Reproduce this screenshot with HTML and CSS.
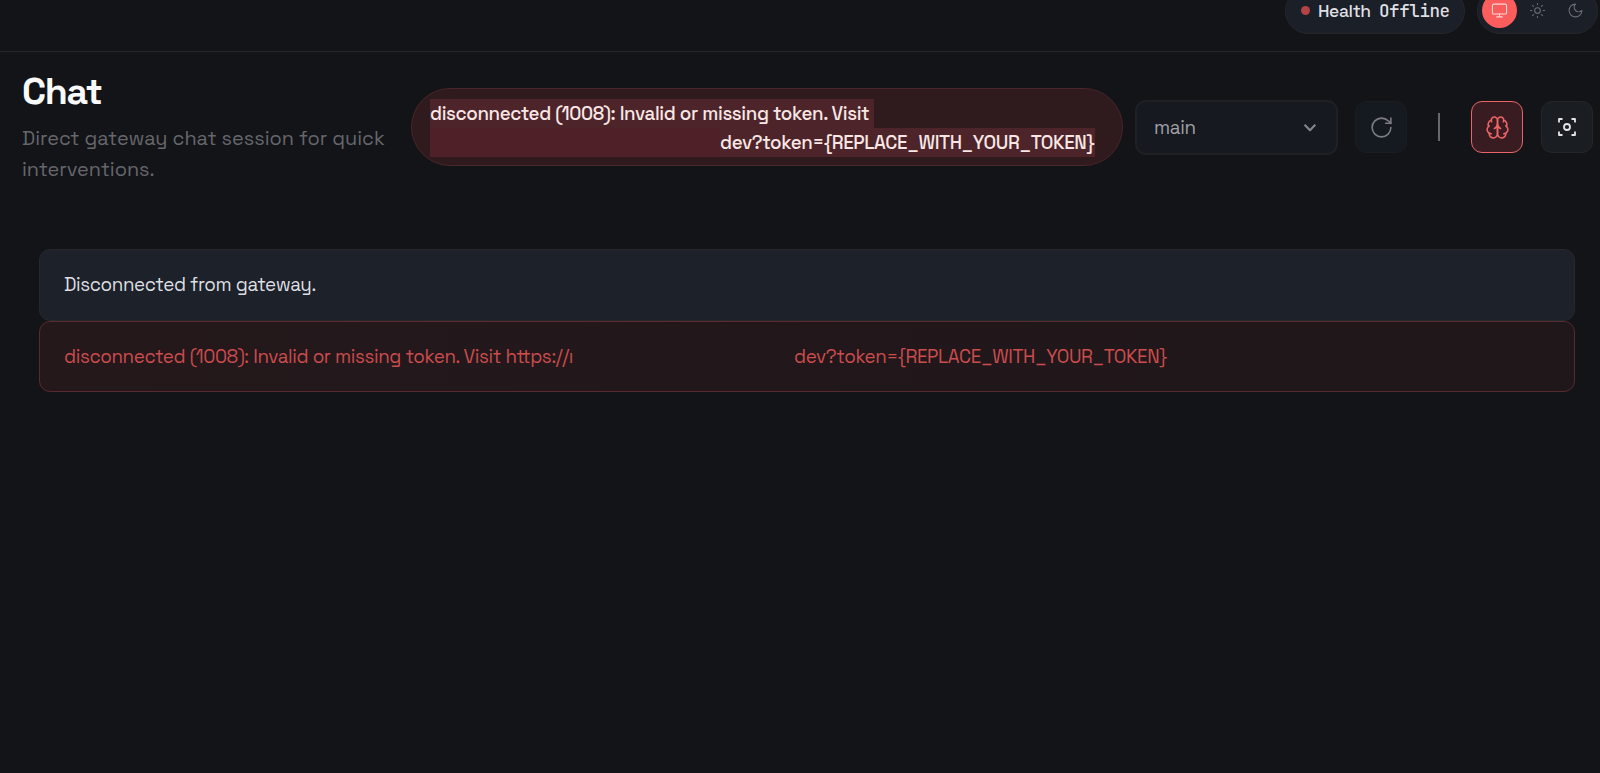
FILE: index.html
```html
<!DOCTYPE html>
<html lang="en">
<head>
    <meta charset="UTF-8">
    <meta name="viewport" content="width=device-width, initial-scale=1.0">
    <title>Chat</title>
    <link rel="stylesheet" href="styles.css">
</head>
<body>
    <header class="topbar">
        <div class="health">
            <span class="dot"></span>
            <span class="health-label">Health</span>
            <span class="health-value">Offline</span>
        </div>
        <div class="theme">
            <button class="theme-btn active">
                <svg class="icon-small" viewBox="0 0 24 24"><rect x="2" y="3" width="20" height="14" rx="2"/><path d="M8 21h8M12 17v4"/></svg>
            </button>
            <button class="theme-btn">
                <svg class="icon-small" viewBox="0 0 24 24"><circle cx="12" cy="12" r="4"/><path d="M12 2v2M12 20v2M4.93 4.93l1.41 1.41M17.66 17.66l1.41 1.41M2 12h2M20 12h2M6.34 17.66l-1.41 1.41M19.07 4.93l-1.41 1.41"/></svg>
            </button>
            <button class="theme-btn">
                <svg class="icon-small" viewBox="0 0 24 24"><path d="M12 3a6 6 0 0 0 9 9 9 9 0 1 1-9-9Z"/></svg>
            </button>
        </div>
    </header>
    <section class="page-header">
        <div class="page-title">
            <h1>Chat</h1>
            <p>Direct gateway chat session for quick interventions.</p>
        </div>
        <div class="error-pill">
            <div class="pill-line"><span class="selected first">disconnected (1008): Invalid or missing token. Visit</span></div>
            <div class="pill-line"><span class="redacted"></span><span class="selected second">dev?token={REPLACE_WITH_YOUR_TOKEN}</span></div>
        </div>
        <div class="session">
            <span>main</span>
            <svg class="chevron" viewBox="0 0 14 14"><path d="M1.5 4.5l5 5 5-5"/></svg>
        </div>
        <button class="btn-icon muted">
            <svg class="icon" viewBox="0 0 24 24"><path d="M21 12a9 9 0 1 1-9-9c2.52 0 4.93 1 6.74 2.74L21 8"/><path d="M21 3v5h-5"/></svg>
        </button>
        <span class="separator"></span>
        <button class="btn-icon active">
            <svg class="icon" viewBox="0 0 24 24"><path d="M12 5a3 3 0 1 0-5.997.125 4 4 0 0 0-2.526 5.77 4 4 0 0 0 .556 6.588A4 4 0 1 0 12 18Z"/><path d="M12 5a3 3 0 1 1 5.997.125 4 4 0 0 1 2.526 5.77 4 4 0 0 1-.556 6.588A4 4 0 1 1 12 18Z"/><path d="M15 13a4.5 4.5 0 0 1-3-4 4.5 4.5 0 0 1-3 4"/><path d="M17.599 6.5a3 3 0 0 0 .399-1.375M6.003 5.125A3 3 0 0 0 6.401 6.5M3.477 10.896a4 4 0 0 1 .585-.396M19.938 10.5a4 4 0 0 1 .585.396M6 18a4 4 0 0 1-1.967-.516M19.967 17.484A4 4 0 0 1 18 18"/></svg>
        </button>
        <button class="btn-icon focus">
            <svg class="icon" viewBox="0 0 24 24"><path d="M4 7.5V4h3.5M20 7.5V4h-3.5M4 16.5V20h3.5M20 16.5V20h-3.5"/><circle cx="12" cy="12" r="3"/></svg>
        </button>
    </section>
    <main class="chat">
        <div class="callout"><span class="note">Disconnected from gateway.</span></div>
        <div class="callout danger">
            <span class="reason">disconnected (1008): Invalid or missing token. Visit https://ı</span>
            <span class="token">dev?token={REPLACE_WITH_YOUR_TOKEN}</span>
        </div>
    </main>
</body>
</html>
```

FILE: styles.css
```css
* {
    box-sizing: border-box;
    margin: 0;
    padding: 0;
}
body {
    height: 773px;
    background-color: #131418;
    color: #dedfe2;
    font-family: "Space Grotesk", Inter, sans-serif;
    letter-spacing: -0.02em;
    overflow: hidden;
}
button {
    display: flex;
    justify-content: center;
    align-items: center;
    border: none;
    background: none;
    flex-shrink: 0;
}
svg {
    fill: none;
    stroke: currentColor;
    stroke-width: 1.5;
    stroke-linecap: round;
    stroke-linejoin: round;
}
.topbar {
    display: flex;
    justify-content: flex-end;
    gap: 12px;
    height: 52px;
    padding-right: 2px;
    border-bottom: 1px solid #27282c;
    overflow: hidden;
}
.health, .theme {
    display: flex;
    align-items: center;
    height: 46px;
    margin-top: -12px;
    padding-bottom: 1px;
    background-color: #1b1f27;
    border: 1px solid #26272b;
    border-radius: 23px;
}
.health {
    width: 180px;
    padding-left: 15px;
    font-size: 17.5px;
    font-weight: 500;
    letter-spacing: -0.4px;
    white-space: nowrap;
}
.dot {
    width: 9px;
    height: 9px;
    margin-right: 8px;
    border-radius: 50%;
    background-color: #b44345;
}
.health-label {
    width: 61px;
}
.health-value {
    font-family: "JetBrains Mono", "DejaVu Sans Mono", monospace;
}
.theme {
    width: 121px;
    gap: 3px;
    padding-left: 4px;
}
.theme-btn {
    width: 35px;
    height: 35px;
    border-radius: 50%;
    color: #6d6e74;
}
.theme-btn.active {
    background-color: #fb5c5c;
    color: #ffd9d9;
}
.icon-small {
    width: 17px;
    height: 17px;
}
.page-header {
    display: flex;
    align-items: center;
    height: 150px;
    padding-left: 22px;
}
.page-title {
    width: 389px;
}
h1 {
    font-size: 37.5px;
    line-height: 42px;
    font-weight: 700;
    letter-spacing: -0.035em;
    color: #fafafa;
}
.page-title p {
    width: 380px;
    margin-top: 11px;
    font-size: 19.85px;
    line-height: 31px;
    letter-spacing: 0;
    color: #66676c;
}
.error-pill {
    width: 712px;
    height: 78px;
    padding: 10px 0 0 18px;
    border: 1px solid #4a2529;
    border-radius: 39px;
    background-color: #2f1a1e;
    color: #fbe6e6;
    font-size: 18.75px;
    font-weight: 500;
    letter-spacing: -0.02em;
    line-height: 29px;
    white-space: nowrap;
}
.pill-line {
    display: flex;
}
.selected {
    background-color: #4c2429;
}
.selected.first {
    width: 444px;
}
.selected.second {
    width: 375px;
}
.redacted {
    width: 290px;
    background-color: #502028;
}
.session {
    display: flex;
    justify-content: space-between;
    align-items: center;
    width: 203px;
    height: 55px;
    margin-left: 12px;
    padding: 0 18px 0 17px;
    border: 2px solid #1f2024;
    border-radius: 11px;
    background-color: #161920;
    color: #a0a1a5;
    font-size: 18.75px;
}
.chevron {
    width: 15px;
    height: 15px;
    stroke-width: 2;
    stroke-linecap: butt;
    color: #85868b;
}
.btn-icon {
    width: 52px;
    height: 52px;
    border: 1px solid #24262a;
    border-radius: 11px;
    background-color: #1a1d22;
}
.btn-icon.muted {
    margin-left: 17px;
    border-color: #1b1d21;
    background-color: #151920;
    color: #7d7e82;
}
.btn-icon.active {
    border-color: #e96466;
    background-color: #391c21;
    color: #ee6565;
}
.btn-icon.focus {
    margin-left: 18px;
    color: #e4e4e7;
}
.btn-icon.focus .icon {
    width: 24px;
    height: 24px;
    margin-right: 1px;
    stroke-width: 1.8;
    stroke-linecap: butt;
}
.icon {
    width: 25px;
    height: 25px;
}
.separator {
    width: 2px;
    height: 28px;
    margin: 0 31px;
    background-color: #67686c;
    flex-shrink: 0;
}
.chat {
    padding: 47px 25px 0 39px;
}
.callout {
    display: flex;
    align-items: center;
    height: 72px;
    padding: 0 0 2px 24px;
    border: 1px solid #26282d;
    border-radius: 11px;
    background-color: #1d2129;
    font-size: 18.75px;
    letter-spacing: -0.02em;
    white-space: nowrap;
}
.callout.danger {
    height: 71px;
    padding-bottom: 0;
    border-color: #572a2e;
    background: linear-gradient(to right, #24181b, #1f171a);
    color: #cd4c4d;
}
.reason {
    width: 730px;
}
```
